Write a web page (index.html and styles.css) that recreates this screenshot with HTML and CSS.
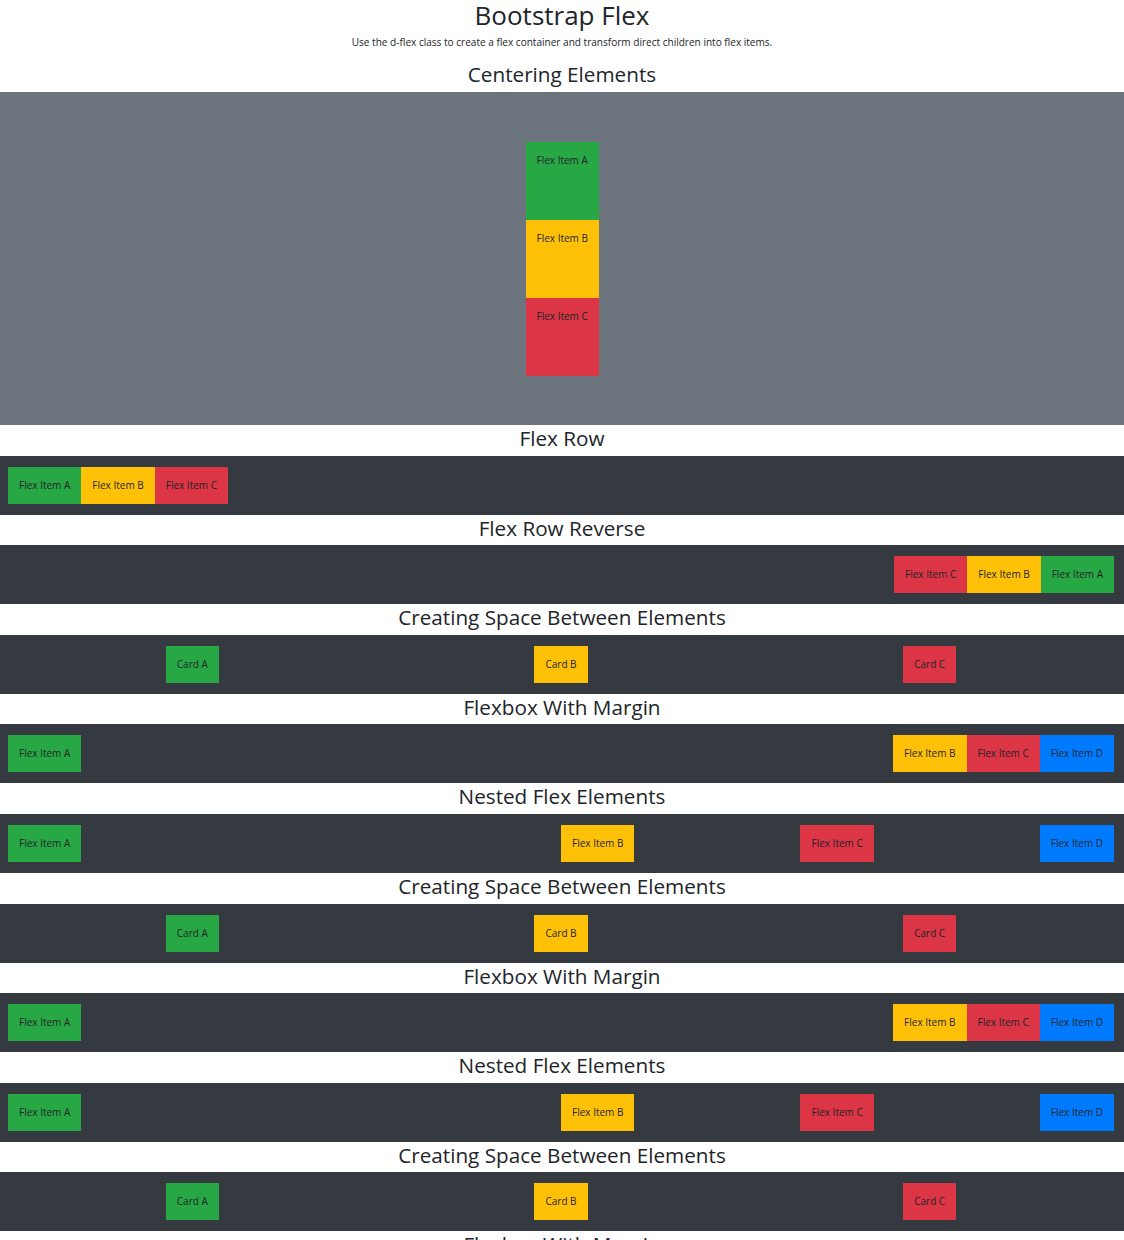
FILE: index.html
```html
<!DOCTYPE html>
<html lang="en">
<head>
<meta charset="utf-8">
<title>Bootstrap Flex</title>
<link rel="stylesheet" href="styles.css">
</head>
<body>
<header class="intro">
  <h1 class="title">Bootstrap Flex</h1>
  <p class="lead">Use the d-flex class to create a flex container and transform direct children into flex items.</p>
</header>

<h2 class="sec-title first">Centering Elements</h2>
<div class="box box-grey center-col">
  <div class="item tall green">Flex Item A</div>
  <div class="item tall yellow">Flex Item B</div>
  <div class="item tall red">Flex Item C</div>
</div>

<h2 class="sec-title">Flex Row</h2>
<div class="box">
  <div class="item green">Flex Item A</div>
  <div class="item yellow">Flex Item B</div>
  <div class="item red">Flex Item C</div>
</div>

<h2 class="sec-title">Flex Row Reverse</h2>
<div class="box reverse">
  <div class="item green">Flex Item A</div>
  <div class="item yellow">Flex Item B</div>
  <div class="item red">Flex Item C</div>
</div>

<h2 class="sec-title">Creating Space Between Elements</h2>
<div class="box around">
  <div class="item green">Card A</div>
  <div class="item yellow">Card B</div>
  <div class="item red">Card C</div>
</div>

<h2 class="sec-title">Flexbox With Margin</h2>
<div class="box">
  <div class="item green push-right">Flex Item A</div>
  <div class="item yellow">Flex Item B</div>
  <div class="item red">Flex Item C</div>
  <div class="item blue">Flex Item D</div>
</div>

<h2 class="sec-title">Nested Flex Elements</h2>
<div class="box between">
  <div class="item green">Flex Item A</div>
  <div class="nested">
    <div class="item yellow">Flex Item B</div>
    <div class="item red">Flex Item C</div>
    <div class="item blue">Flex Item D</div>
  </div>
</div>

<h2 class="sec-title">Creating Space Between Elements</h2>
<div class="box around">
  <div class="item green">Card A</div>
  <div class="item yellow">Card B</div>
  <div class="item red">Card C</div>
</div>

<h2 class="sec-title">Flexbox With Margin</h2>
<div class="box">
  <div class="item green push-right">Flex Item A</div>
  <div class="item yellow">Flex Item B</div>
  <div class="item red">Flex Item C</div>
  <div class="item blue">Flex Item D</div>
</div>

<h2 class="sec-title">Nested Flex Elements</h2>
<div class="box between">
  <div class="item green">Flex Item A</div>
  <div class="nested">
    <div class="item yellow">Flex Item B</div>
    <div class="item red">Flex Item C</div>
    <div class="item blue">Flex Item D</div>
  </div>
</div>

<h2 class="sec-title">Creating Space Between Elements</h2>
<div class="box around">
  <div class="item green">Card A</div>
  <div class="item yellow">Card B</div>
  <div class="item red">Card C</div>
</div>

<h2 class="sec-title">Flexbox With Margin</h2>
<div class="box">
  <div class="item green push-right">Flex Item A</div>
  <div class="item yellow">Flex Item B</div>
  <div class="item red">Flex Item C</div>
  <div class="item blue">Flex Item D</div>
</div>
</body>
</html>
```

FILE: styles.css
```css
html, body {
  margin: 0;
  padding: 0;
  background: #ffffff;
}
body {
  font-family: "Open Sans", "Noto Sans", sans-serif;
  color: #212529;
}
.intro {
  text-align: center;
}
.title {
  margin: 0;
  font-size: 26px;
  font-weight: 400;
  line-height: 30px;
  color: #212529;
}
.lead {
  margin: 4px 0 0;
  font-size: 10.05px;
  line-height: 16px;
  color: #212529;
}
.sec-title {
  margin: 0;
  padding-bottom: 4px;
  font-size: 20.7px;
  font-weight: 400;
  line-height: 26.6px;
  text-align: center;
  color: #212529;
}
.sec-title.first {
  margin-top: 10px;
  line-height: 28px;
}
.box {
  display: flex;
  background: #343a40;
  padding: 11px 10px 11px 8px;
}
.box-grey {
  background: #6c757d;
  height: 333px;
  box-sizing: border-box;
  padding: 0;
}
.center-col {
  flex-direction: column;
  justify-content: center;
  align-items: center;
}
.reverse {
  flex-direction: row-reverse;
}
.around {
  justify-content: space-around;
}
.between {
  justify-content: space-between;
}
.nested {
  display: flex;
  justify-content: space-between;
  width: 50%;
}
.push-right {
  margin-right: auto;
}
.item {
  font-size: 10px;
  line-height: 15px;
  padding: 11px 11px;
  color: #212529;
  white-space: nowrap;
}
.item.tall {
  height: 78px;
  box-sizing: border-box;
  width: 73px;
  text-align: center;
}
.green { background: #28a745; }
.yellow { background: #ffc107; }
.red { background: #dc3545; }
.blue { background: #007bff; }
```
